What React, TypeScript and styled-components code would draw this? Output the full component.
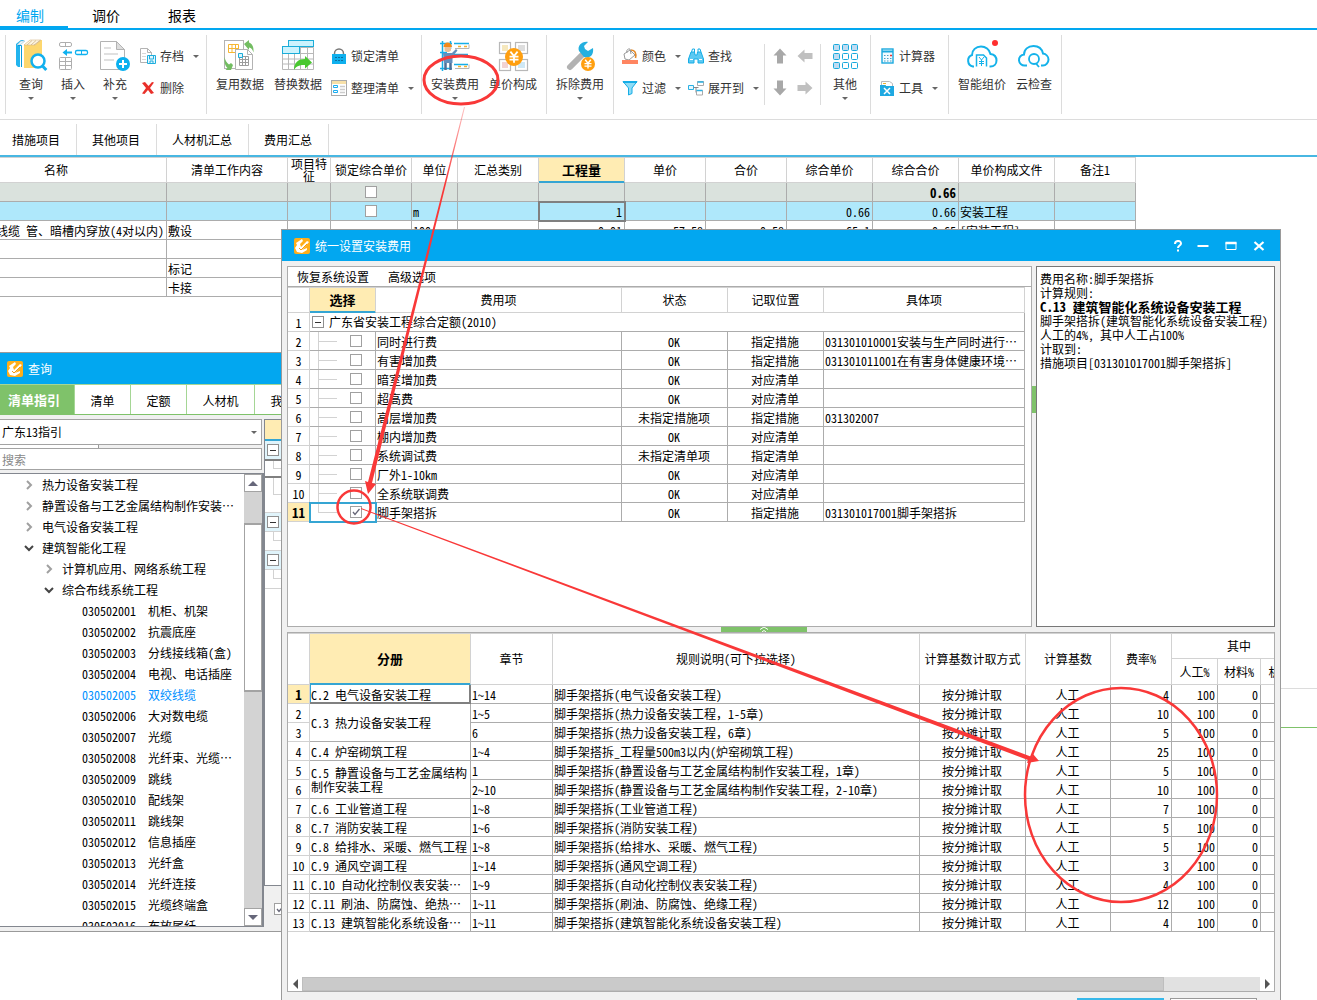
import React from "react";
import styled, { createGlobalStyle, css } from "styled-components";

const ui = `"Noto Sans CJK SC", sans-serif`;
const grid = `"Noto Sans Mono CJK SC", "Noto Sans CJK SC", sans-serif`;
const brand = "#02a7f0";
const green = "#7fc26a";
const line = "#acacac";
const softLine = "#d2d2d2";
const yellow = "#ffecb3";
const focusBlue = "#35a5d3";

const Global = createGlobalStyle`
  *, *::before, *::after { box-sizing: border-box; }
  body { margin: 0; background: #fff; }
  button, input, select { font: inherit; color: inherit; margin: 0; padding: 0; border: 0; background: none; }
  ul { list-style: none; margin: 0; padding: 0; }
`;

const Desktop = styled.div`
  position: relative;
  display: flex;
  flex-direction: column;
  height: 100vh;
  overflow: hidden;
  background: #fff;
  color: #000;
  font: 12px/18px ${grid};
`;

/* ---------- menu and ribbon ---------- */

const MenuBar = styled.nav`
  flex: none;
  display: flex;
  height: 30px;
  border-bottom: 2px solid ${brand};
  font: 14px/32px ${ui};
`;

const MenuTab = styled.button<{ $active?: boolean }>`
  height: 28px;
  padding: 0 24px;
  line-height: 30px;
  white-space: nowrap;
  &:first-child { padding-left: 16px; }
  ${p => p.$active && css`color: ${brand}; border-bottom: 2px solid ${brand};`}
`;

const Ribbon = styled.div`
  flex: none;
  display: flex;
  height: 90px;
  padding: 5px 0 0 5px;
  border-bottom: 1px solid #dcdcdc;
  color: #333;
  font: 12px/16px ${ui};
`;

const Group = styled.div<{ $w: number; $last?: boolean }>`
  flex: none;
  display: flex;
  align-items: flex-start;
  width: ${p => p.$w}px;
  height: 79px;
  padding-left: 4px;
  border-left: 1px solid #dcdcdc;
  ${p => p.$last && css`border-right: 1px solid #dcdcdc;`}
`;

const SubGroup = styled.div`
  display: flex;
  height: 61px;
  margin-top: 9px;
  padding: 0 3px 0 2px;
  border: solid #dcdcdc;
  border-width: 0 1px;
`;

const Big = styled.button<{ $w: number }>`
  display: flex;
  flex-direction: column;
  align-items: center;
  width: ${p => p.$w}px;
  padding-top: 4px;
  white-space: nowrap;
  cursor: pointer;
  svg { display: block; overflow: visible; }
  span { margin: 5px 0; }
`;

const SmallColumn = styled.div<{ $w: number }>`
  width: ${p => p.$w}px;
  padding: 5px 0 0 4px;
`;

const Small = styled.button`
  display: flex;
  align-items: center;
  height: 32px;
  white-space: nowrap;
  cursor: pointer;
  svg { display: block; margin-right: 4px; }
`;

const Caret = styled.i<{ $gap?: number }>`
  width: 0;
  height: 0;
  margin-left: ${p => p.$gap || 0}px;
  border: solid transparent;
  border-width: 3px 3px 0;
  border-top-color: #666;
`;

const Nudge = styled.div`
  display: grid;
  grid-template: 32px 32px / 25px 25px;
  margin-top: -4px;
  button { display: grid; place-items: center; }
`;

const Svg = ({ s = 32, children }: { s?: number; children: React.ReactNode }) => (
  <svg width={s} height={s} viewBox={`0 0 ${s} ${s}`} fill="none" aria-hidden="true">{children}</svg>
);

const Coin = ({ x, y, r }: { x: number; y: number; r: number }) => (
  <g>
    <circle cx={x} cy={y} r={r} fill="#ff9f0f" />
    <g stroke="#fff" strokeWidth={r / 5}>
      <path d={`M${x - r * 0.4} ${y - r * 0.6}L${x} ${y - r * 0.1}L${x + r * 0.4} ${y - r * 0.6}M${x} ${y - r * 0.1}V${y + r * 0.65}`} />
      <path d={`M${x - r * 0.5} ${y - r * 0.05}H${x + r * 0.5}M${x - r * 0.5} ${y + r * 0.3}H${x + r * 0.5}`} />
    </g>
  </g>
);

const icons = {
  books: (
    <Svg>
      <path d="M1 5l5-4h3L5 6v22H3l-2-2z" fill="#22b4ee" />
      <path d="M6 2h4L5 6H2z" fill="#e8f6fc" stroke="#a9c6d2" strokeWidth=".6" />
      <path d="M3 6.500h3.500V28" stroke="#0a9bd8" />
      <path d="M9 6l6-5h12v22l-5 6H9z" fill="#fdd76e" />
      <path d="M15 1h11l-6 5H9z" fill="#fdf5e0" stroke="#d6b98a" strokeWidth=".6" />
      <path d="M17 1.500l-5 4.500m9-4.500l-5 4.500m9-4.500l-6 4.500" stroke="#cdb187" strokeWidth=".8" />
      <circle cx="23" cy="22" r="6.500" fill="#fff" stroke="#12b0ee" strokeWidth="2.500" />
      <path d="M27.500 27l3.800 4" stroke="#12b0ee" strokeWidth="3" />
    </Svg>
  ),
  insert: (
    <Svg>
      <g stroke="#aeaeae">
        <rect x="2.500" y="3.500" width="12" height="4" rx="1.500" /><path d="M8.500 3.500v4" />
        <rect x="2.500" y="18.500" width="12" height="12" rx="1" /><path d="M8.500 18.500v12m-6-8h12m-12 4h12" />
      </g>
      <path d="M5.500 13.500l4.500-3.500v2.500h5v2h-5V17z" fill="#0db1f0" />
      <rect x="18.500" y="11.500" width="12" height="4" rx="1.500" stroke="#0db1f0" strokeWidth="1.300" /><path d="M24.500 11.500v4" stroke="#0db1f0" />
    </Svg>
  ),
  supplement: (
    <Svg>
      <path d="M1.500 2.500h16l8 8v20h-24z" fill="#fff" stroke="#b3b3b3" />
      <path d="M17.500 2.500v8h8z" fill="#ddd" stroke="#b3b3b3" />
      <path d="M5 9h7M5 15h14M5 21h10" stroke="#e0e0e0" strokeWidth="2" />
      <circle cx="24" cy="25" r="7" fill="#0bb0ef" />
      <path d="M24 21v8m-4-4h8" stroke="#fff" strokeWidth="2" />
    </Svg>
  ),
  archive: (
    <Svg s={16}>
      <path d="M.5.500h7l4 4v10H.5z" fill="#fff" stroke="#b3b3b3" /><path d="M7.500.500v4h4" stroke="#b3b3b3" />
      <path d="M2 5.500h4m-4 3h4m-4 3h4" stroke="#d8d8d8" />
      <path d="M7.500 7.500h8v8h-8z" fill="#e3f6fd" stroke="#1eaede" /><path d="M9.500 8v3h4V8m-3.500 7.500v-2.500h3v2.500" stroke="#1eaede" />
    </Svg>
  ),
  remove: (
    <Svg s={16}>
      <path d="M2 3l3-1 3.500 4L12 2l2 .5-4 5.500 4 5-3 1-3-4-3.500 4L2 13.500 6 8z" fill="#e9302a" />
    </Svg>
  ),
  reuse: (
    <Svg>
      <rect x=".5" y="1.500" width="19" height="28" fill="#fff" stroke="#b3b3b3" />
      <path d="M4.500 5.500h10v8h-10zm0 4h10m-6.500-4v8m3.500-8v8" stroke="#f7b731" />
      <path d="M11.500 10.500h12l5 5v15h-17z" fill="#fff" stroke="#b3b3b3" /><path d="M23.500 10.500v5h5" stroke="#b3b3b3" />
      <path d="M15.500 17.500h9v9h-9zm0 3h9m-9 3h9m-6-6v9m3-9v9" stroke="#9c9c9c" />
      <path d="M14.500 14.500h4v4h-4z" fill="#d9f3fc" stroke="#1badd9" />
      <path d="M20 5l5-4v2.500c3 1 5 4 4.500 10-1-3-2-4.500-4.500-5V11z" fill="#73bd62" />
      <path d="M9 26l-2 5H1.500l2-2C1 27 0 23 .5 18c1 4 2.500 6 4.500 7.500L7 24z" fill="#73bd62" />
    </Svg>
  ),
  replace: (
    <Svg>
      <path d="M.5 8.500h31v22H.5zm0 6h31m-31 5.500h31m-31 5h31M6.500 8.500v22m6-22v22m6-22v22m7-22v22" stroke="#b8b8b8" />
      <rect x="6.500" y="1.500" width="25" height="6" fill="#cdf3fd" stroke="#1badd9" />
      <rect x=".5" y="7.500" width="17" height="7" fill="#cdf3fd" stroke="#1badd9" />
      <path d="M12 31c0-8 5-11 11-11v-3l7 6.500-7 6V26c-4 0-8 0-11 5z" fill="#49c830" />
    </Svg>
  ),
  lock: (
    <Svg s={16}>
      <path d="M3.500 7V5.500a4.500 4.500 0 019 0V7" stroke="#777" strokeWidth="1.500" />
      <rect x="1" y="6" width="14" height="10" fill="#0fb0ee" />
      <path d="M4 9.500h2m1 0h2m1 0h2M4 12.500h2m1 0h2m1 0h2" stroke="#0b6ea0" />
    </Svg>
  ),
  tidy: (
    <Svg s={16}>
      <rect x=".5" y=".5" width="15" height="15" fill="#fff" stroke="#aaa" />
      <path d="M1 2.500h14" stroke="#f7e0a8" strokeWidth="3" />
      <path d="M2.500 5.500h4v2h-4zm0 5h4v2h-4z" stroke="#1badf0" />
      <path d="M9 6.500h5M9 9.500h5M9 12.500h5" stroke="#ccc" strokeWidth="1.500" />
    </Svg>
  ),
  install: (
    <Svg>
      <path d="M3.500 2v30m8-30v8M1 4.500h12M1 13.500h7M1 29.500h12" stroke="#16aee8" strokeWidth="1.500" />
      <path d="M15 4.500h15m-15 11h14m-14 10h14" stroke="#16aee8" strokeWidth="1.300" />
      <path d="M16 9.500h14v-4m-14 24h14v-4" stroke="#b5b5b5" />
      <path d="M19 7.500h3m3 0h3M19 27.500h3m3 0h3" stroke="#f5b431" strokeWidth="1.500" />
      <path d="M4.500 8c0-6 8-6 8.500 0z" fill="#f28a1c" /><path d="M5.500 8h6.500v3.500l-2 1.500H7l-1.500-1.500z" fill="#eabf97" />
      <path d="M4 14h9l4-4 1.500 1.500-5 6V24H5z" fill="#638fbd" /><path d="M6.500 24v7m5-7v7" stroke="#4f6f96" strokeWidth="2.500" />
    </Svg>
  ),
  compose: (
    <Svg>
      <g strokeWidth="1.200" stroke="#b8b8b8" fill="#fff">
        <rect x="2.500" y="3.500" width="11" height="11" /><rect x="18.500" y="3.500" width="12" height="11" />
        <rect x="2.500" y="20.500" width="11" height="11" /><rect x="18.500" y="20.500" width="12" height="11" />
      </g>
      <path d="M5 6h6v6H5z" fill="#f6e8bd" /><path d="M21 6h7v6h-7z" fill="#ddd" />
      <path d="M5 23h6v6H5z" fill="#f2d3d3" /><path d="M21 23h7v6h-7z" fill="#cfe8f5" />
      <Coin x={17} y={18} r={9} />
    </Svg>
  ),
  wrench: (
    <Svg>
      <path d="M6 28L19 15" stroke="#b2b2b2" strokeWidth="6" strokeLinecap="round" />
      <path d="M24 3c-6-1-11 4-9 9l5 6c6 2 10-2 9-9l-5 3-3-2-1-3z" fill="#25b0df" />
      <Coin x={24} y={25} r={7} />
    </Svg>
  ),
  color: (
    <Svg s={16}>
      <path d="M2 6l6-4 5 5-6 5-4-1z" fill="#fff" stroke="#999" /><path d="M5 5c-1-3 1-4.500 3-4l1 5" stroke="#999" />
      <path d="M9 2c4 0 5.500 3 4.500 8" stroke="#e48a2a" strokeWidth="1.600" />
      <path d="M0 12h16v4H0z" fill="#ff8561" />
    </Svg>
  ),
  filter: (
    <Svg s={16}>
      <path d="M1 1.500h14L10 8v5.500L6.500 15V8z" fill="#8edcf6" stroke="#16ade6" /><path d="M1 2h14" stroke="#16ade6" strokeWidth="2" />
    </Svg>
  ),
  find: (
    <Svg s={16}>
      <path d="M3.500 4l1-3h2v3m6.500 0l-1-3h-2v3" stroke="#16ade6" />
      <path d="M3 4h3.500l.5 3h2l.5-3H13l2.500 7v4H10v-4H6v4H.5v-4z" fill="#5cc9f2" stroke="#16ade6" />
      <path d="M2 11.500h3m6 0h3" stroke="#fff" />
    </Svg>
  ),
  expand: (
    <Svg s={16}>
      <path d="M.5 5.500h5v4h-5z" stroke="#29b1e4" fill="#e8f7fd" /><path d="M5.500 7.500h5m-2.500 0v5h2" stroke="#888" />
      <path d="M9.500 1.500h6v4h-6zm-1 9h6v4.500h-6z" fill="#fff" stroke="#aaa" /><path d="M9.500 2h6m-7 8.500h6" stroke="#29b1e4" strokeWidth="1.500" />
    </Svg>
  ),
  others: (
    <Svg>
      {[0, 1, 2].map(r => [0, 1, 2].map(c => (
        <rect key={`${r}${c}`} x={4.500 + c * 9} y={5.500 + r * 9} width="6" height="6" rx="1" stroke="#18a9dc"
          fill={r === 0 || c === 0 ? "#bfdcf2" : "#fff"} />
      )))}
    </Svg>
  ),
  calc: (
    <Svg s={16}>
      <rect x="3" y="1" width="11" height="14" stroke="#1ba9de" strokeWidth="1.400" fill="#f2fbff" /><path d="M3 3.500h11" stroke="#1ba9de" strokeWidth="2" />
      <path d="M5 7.500h1.500m1.500 0h1.500M5 10.500h1.500m1.500 0h1.500m1.500 0H12.500M5 13h1.500m1.500 0h1.500m1.500 0H12.500" stroke="#4d9fc4" />
      <path d="M11 7.500h2" stroke="#e33" strokeWidth="1.500" />
    </Svg>
  ),
  tools: (
    <Svg s={16}>
      <path d="M2.500 6V1.500h8l3 2V6" fill="#fff" stroke="#bbb" /><path d="M4 3.500h3m-3 2h3" stroke="#f2b432" />
      <path d="M1 5h5l1 1h8v10H1z" fill="#1fa9e2" />
      <path d="M5 8l6 6m0-6l-6 6" stroke="#fff" strokeWidth="1.500" />
    </Svg>
  ),
  cloudPrice: (
    <Svg>
      <path d="M8 27.500H7a6 6 0 01-1-11.500c0-5 4-8.500 9-8.500 4.500 0 8.500 3 9.500 7.500 3.500.5 6 3 6 6.500s-2.500 6-6 6h-1" stroke="#14b2ea" strokeWidth="2" />
      <path d="M10.500 27.500V16h7l3 3v8.500" stroke="#14b2ea" strokeWidth="1.500" />
      <path d="M13 18l2.500 3 2.500-3m-2.500 3v6m-2.500-4.500h5m-5 2h5" stroke="#14b2ea" />
      <circle cx="29" cy="4" r="3" fill="#ff2e2e" />
    </Svg>
  ),
  cloudCheck: (
    <Svg>
      <path d="M9 26.500H7a5.500 5.500 0 01-1-11c0-5 4-8.500 9.500-8.500s8.500 3 9.500 7.500c3 .5 5.500 3 5.500 6s-2.500 6-5.500 6h-2" stroke="#14b2ea" strokeWidth="2" />
      <circle cx="16" cy="20" r="5" stroke="#14b2ea" strokeWidth="1.800" /><path d="M18 24.500l3 3.500" stroke="#14b2ea" strokeWidth="1.800" />
    </Svg>
  ),
};

const ArrowIcon = ({ turn, fill }: { turn: number; fill: string }) => (
  <svg width="16" height="16" viewBox="0 0 16 16" aria-hidden="true">
    <path d="M8 .5l6.500 7H11v8H5v-8H1.500z" fill={fill} transform={`rotate(${turn} 8 8)`} />
  </svg>
);

const AppMark = () => (
  <svg width="16" height="16" viewBox="0 0 16 16" aria-hidden="true">
    <rect width="16" height="16" rx="2" fill="#ffae1a" />
    <path d="M2 5l6-4 1 2-3 3 1 3 6-6 2 1-7 8 5-2 0 2-5 3-5-1-2-4 2-3z" fill="#fff" />
    <path d="M5 10l2 2 6-6" stroke="#f19a18" strokeWidth="1" fill="none" />
  </svg>
);

const BigButton = ({ icon, label, w = 58, menu }: { icon: keyof typeof icons; label: string; w?: number; menu?: boolean }) => (
  <Big $w={w}>{icons[icon]}<span>{label}</span>{menu && <Caret />}</Big>
);

const SmallButton = ({ icon, label, menu }: { icon: keyof typeof icons; label: string; menu?: boolean }) => (
  <Small>{icons[icon]}{label}{menu && <Caret $gap={9} />}</Small>
);

/* ---------- main sheet ---------- */

const SheetTabs = styled.nav`
  flex: none;
  display: flex;
  align-items: flex-end;
  height: 37px;
  border-bottom: 2px solid #48b7e2;
`;

const SheetTab = styled.button`
  height: 31px;
  padding: 0 16px 0 15px;
  border-right: 1px solid #dcdcdc;
  white-space: nowrap;
  &:first-child { padding-left: 12px; }
`;

const SheetArea = styled.div`
  flex: 1;
  min-height: 0;
  overflow: hidden;
`;

const Dock = styled.div`
  flex: 0 0 312px;
  border-top: 1px solid #dcdcdc;
  &::before {
    content: "";
    display: block;
    height: 39px;
    border-bottom: 1px solid ${green};
  }
`;

const Table = styled.table<{ $shift?: number }>`
  table-layout: fixed;
  width: 0;
  margin-left: ${p => -(p.$shift || 0)}px;
  border-collapse: separate;
  border-spacing: 0;
`;

const Th = styled.th<{ $h?: number; $current?: boolean; $top?: boolean }>`
  height: ${p => p.$h || 25}px;
  padding: 0;
  border: solid ${softLine};
  border-width: ${p => (p.$top ? 1 : 0)}px 1px 1px 0;
  font-weight: normal;
  line-height: 14px;
  white-space: nowrap;
  overflow: hidden;
  ${p => p.$current && css`background: ${yellow}; font-weight: bold; font-size: 13px; box-shadow: inset 0 -1px ${focusBlue}; border-bottom-color: ${focusBlue};`}
`;

const WrapTh = styled(Th)`
  white-space: normal;
  overflow: visible;
  line-height: 12px;
`;

const Td = styled.td<{ $align?: string; $bg?: string; $bold?: boolean; $ring?: string }>`
  height: 19px;
  padding: 2px 2px 0 1px;
  border: solid ${line};
  border-width: 0 1px 1px 0;
  line-height: 16px;
  text-align: ${p => p.$align || "left"};
  background: ${p => p.$bg || "transparent"};
  ${p => p.$bold && css`font-weight: bold; font-size: 13px;`}
  white-space: nowrap;
  overflow: hidden;
  ${p => p.$ring && css`outline: 2px solid ${p.$ring}; outline-offset: -1px;`}
`;

const MergedTd = styled(Td)<{ $picked?: boolean; $double?: boolean }>`
  padding-top: ${p => (p.$double ? 0 : 2)}px;
  line-height: 14px;
  white-space: normal;
  ${p => p.$picked && css`
    border-color: #808080;
    box-shadow: inset -1px -1px #808080, inset 1px 0 ${focusBlue};
  `}
`;

const RowNo = styled.th<{ $current?: boolean }>`
  height: 19px;
  padding: 2px 0 0;
  border: solid ${softLine};
  border-width: 0 1px 1px 0;
  font-weight: ${p => (p.$current ? "bold" : "normal")};
  font-size: ${p => (p.$current ? 13 : 12)}px;
  background: ${p => (p.$current ? yellow : "#fff")};
  line-height: 16px;
`;

const Check = styled.input.attrs({ type: "checkbox" })`
  appearance: none;
  display: block;
  flex: none;
  width: 12px;
  height: 12px;
  margin: 0 auto;
  border: 1px solid #a0a0a0;
  background: #fff;
  &:checked {
    background: #fff url("data:image/svg+xml,%3Csvg xmlns='http://www.w3.org/2000/svg' viewBox='0 0 10 10'%3E%3Cpath d='M2 5l2 2.500L8.500 2' fill='none' stroke='%23667' stroke-width='1.300'/%3E%3C/svg%3E");
  }
`;

const Cols = ({ w }: { w: number[] }) => <colgroup>{w.map((x, i) => <col key={i} style={{ width: x }} />)}</colgroup>;

const mainHeads = ["名称", "清单工作内容", "项目特征", "锁定综合单价", "单位", "汇总类别", "工程量", "单价", "合价", "综合单价", "综合合价", "单价构成文件", "备注1"];
const mainWidths = [221, 121, 43, 81, 46, 81, 86, 81, 81, 86, 86, 96, 81];
const mainRows: { bg?: string; bold?: boolean; check?: boolean; cells: Record<number, string> }[] = [
  { bg: "#dae2dd", bold: true, check: true, cells: { 10: "0.66" } },
  { bg: "#afe8fb", check: true, cells: { 4: "m", 6: "1", 9: "0.66", 10: "0.66", 11: "安装工程" } },
  { cells: { 0: "线缆 管、暗槽内穿放(4对以内)", 1: "敷设", 4: "100", 6: "0.01", 7: "57.58", 8: "0.58", 9: "65.1", 10: "0.65", 11: "[安装工程]" } },
  { cells: {} },
  { cells: { 1: "标记" } },
  { cells: { 1: "卡接" } },
];

const CheckTd = styled(Td)`
  padding-top: 0;
`;

const MainSheet = () => (
  <Table $shift={54}>
    <Cols w={mainWidths} />
    <thead>
      <tr>{mainHeads.map((h, i) => i === 2
        ? <WrapTh key={h} $h={26} $top>{h}</WrapTh>
        : <Th key={h} $h={26} $top $current={i === 6}>{h}</Th>)}</tr>
    </thead>
    <tbody>
      {mainRows.map((r, n) => (
        <tr key={n}>
          {mainHeads.map((h, i) => i === 3
            ? <CheckTd key={h} $bg={r.bg}>{r.check && <Check aria-label={h} />}</CheckTd>
            : (
              <Td key={h} $bg={r.bg} $bold={r.bold} $align={i === 0 || (i > 5 && i < 11) ? "right" : "left"} $ring={n === 1 && i === 6 ? "#808080" : undefined}>
                {r.cells[i]}
              </Td>
            ))}
        </tr>
      ))}
    </tbody>
  </Table>
);

/* ---------- windows ---------- */

const TitleBar = styled.header<{ $pad: number }>`
  display: flex;
  align-items: center;
  gap: 5px;
  height: 31px;
  padding-left: ${p => p.$pad}px;
  background: ${brand};
  color: #fff;
  font: 12px/31px ${ui};
`;

const QueryWindow = styled.section`
  position: absolute;
  left: 0;
  top: 352px;
  width: 420px;
  border: solid #9a9a9a;
  border-width: 1px 0;
  background: #f0f0f0;
`;

const QueryTabs = styled.nav`
  display: flex;
  height: 31px;
  background: #fff;
  border-bottom: 1px solid ${green};
`;

const QueryTab = styled.button<{ $w: number; $active?: boolean }>`
  flex: none;
  width: ${p => p.$w}px;
  padding-top: 2px;
  border: solid #a5d695;
  border-width: 1px 1px 0 0;
  ${p => p.$active && css`background: ${green}; color: #fff; font-weight: bold; font-size: 13px; padding: 0 6px 0 0;`}
`;

const QueryBody = styled.div`
  display: flex;
  align-items: flex-start;
  padding: 4px 0;
`;

const QuerySide = styled.div`
  width: 264px;
  flex: none;
`;

const Combo = styled.div`
  position: relative;
  width: 262px;
  select {
    appearance: none;
    display: block;
    width: 100%;
    height: 26px;
    padding-left: 2px;
    border: 1px solid #a3a3a3;
    border-left: 0;
    background: #fff;
  }
  i { position: absolute; right: 5px; top: 12px; pointer-events: none; }
`;

const Grip = styled.div`
  width: 99px;
  height: 3px;
  border-right: 1px solid #999;
  background: #fff;
`;

const Search = styled.input`
  display: block;
  width: 262px;
  height: 22px;
  padding-left: 2px;
  border: 1px solid #a3a3a3;
  border-left: 0;
  background: #fff;
  &::placeholder { color: #888; opacity: 1; }
`;

const TreeBox = styled.div`
  display: flex;
  height: 454px;
  margin-top: 3px;
  border: solid #83878f;
  border-width: 1px 2px 1px 0;
  background: #fff;
`;

const Tree = styled.ul`
  flex: 1;
  min-width: 0;
  overflow: hidden;
`;

const TreeRow = styled.li<{ $indent: number; $active?: boolean }>`
  height: 21px;
  padding-left: ${p => p.$indent}px;
  color: ${p => (p.$active ? "#0090ff" : "#000")};
  button { display: flex; align-items: center; height: 21px; white-space: nowrap; }
  svg { margin-right: 8px; }
  span { width: 66px; text-align: left; }
`;

const VScroll = styled.div`
  width: 18px;
  display: flex;
  flex-direction: column;
  background: #d3d3d3;
  button { flex: none; height: 18px; border: 1px solid #a3a3a3; background: #fff; display: grid; place-items: center; }
`;

const VThumb = styled.div`
  height: 169px;
  margin-top: 31px;
  margin-bottom: auto;
  border: 1px solid #a3a3a3;
  border-width: 2px 1px;
  background: #fff;
`;

const Triangle = styled.i<{ $dir: "up" | "down" | "left" | "right" }>`
  width: 0;
  height: 0;
  border: 5px solid transparent;
  ${p => p.$dir === "up" && css`border-top: 0; border-bottom-color: #66677a;`}
  ${p => p.$dir === "down" && css`border-bottom: 0; border-top-color: #66677a;`}
  ${p => p.$dir === "left" && css`border-left: 0; border-right-color: #555;`}
  ${p => p.$dir === "right" && css`border-right: 0; border-left-color: #555;`}
`;

const ResultSide = styled.div`
  flex: 1;
`;

const ResultPane = styled.div`
  height: 467px;
  border: 1px solid #83878f;
  background: #fff;
`;

const Band = styled.div<{ $h: number; $bg?: string; $edge?: string; $thick?: number }>`
  height: ${p => p.$h}px;
  padding: 3px 2px 0;
  background: ${p => p.$bg || "#fff"};
  border-bottom: ${p => p.$thick || 1}px solid ${p => p.$edge || softLine};
`;

const Elbow = styled.div<{ $h: number }>`
  width: 14px;
  height: ${p => p.$h}px;
  margin: -3px 0 0 6px;
  border: solid ${softLine};
  border-width: 0 0 1px 1px;
`;

const Fold = styled.button`
  display: grid;
  place-items: center;
  flex: none;
  width: 12px;
  height: 12px;
  border: 1px solid #8f8f8f;
  background: #fff;
  &::before { content: ""; width: 6px; height: 1px; background: #333; }
`;

const ResultFoot = styled.div`
  padding: 17px 0 0 10px;
  input { margin: 0; }
`;

const treeNodes: [number, boolean, string][] = [
  [0, false, "热力设备安装工程"],
  [0, false, "静置设备与工艺金属结构制作安装…"],
  [0, false, "电气设备安装工程"],
  [0, true, "建筑智能化工程"],
  [1, false, "计算机应用、网络系统工程"],
  [1, true, "综合布线系统工程"],
];
const leaves = ["机柜、机架", "抗震底座", "分线接线箱(盒)", "电视、电话插座", "双绞线缆", "大对数电缆", "光缆", "光纤束、光缆…", "跳线", "配线架", "跳线架", "信息插座", "光纤盒", "光纤连接", "光缆终端盒", "布放尾纤"];

const Query = () => (
  <QueryWindow aria-label="查询">
    <TitleBar $pad={7}><AppMark />查询</TitleBar>
    <QueryTabs>
      <QueryTab $w={75} $active>清单指引</QueryTab>
      <QueryTab $w={56}>清单</QueryTab>
      <QueryTab $w={56}>定额</QueryTab>
      <QueryTab $w={68}>人材机</QueryTab>
      <QueryTab $w={44}>我</QueryTab>
    </QueryTabs>
    <QueryBody>
      <QuerySide>
        <Combo>
          <select aria-label="指引"><option>广东13指引</option></select>
          <Caret />
        </Combo>
        <Grip />
        <Search placeholder="搜索" aria-label="搜索" />
        <TreeBox>
          <Tree>
            {treeNodes.map(([level, open, name]) => (
              <TreeRow key={name} $indent={24 + level * 20}>
                <button>
                  <svg width="10" height="10" viewBox="0 0 10 10" fill="none" strokeWidth="2" aria-hidden="true">
                    {open ? <path d="M1 3l4 4 4-4" stroke="#444" /> : <path d="M3 1l4 4-4 4" stroke="#a0a0a0" />}
                  </svg>
                  {name}
                </button>
              </TreeRow>
            ))}
            {leaves.map((name, i) => (
              <TreeRow key={i} $indent={82} $active={i === 4}>
                <button><span>{`0305020${String(i + 1).padStart(2, "0")}`}</span>{name}</button>
              </TreeRow>
            ))}
          </Tree>
          <VScroll>
            <button aria-label="向上"><Triangle $dir="up" /></button>
            <VThumb />
            <button aria-label="向下"><Triangle $dir="down" /></button>
          </VScroll>
        </TreeBox>
      </QuerySide>
      <ResultSide>
        <ResultPane>
          <Band $h={21} $bg={yellow} $edge={focusBlue} $thick={2} />
          <Band $h={20} $bg="#e0f4fb" $edge="#808080" $thick={2}><Fold aria-label="折叠" /></Band>
          <Band $h={17} $edge="#808080" $thick={2}><Elbow $h={8} /></Band>
          <Band $h={35}><Elbow $h={17} /></Band>
          <Band $h={19} $bg="#e0f4fb"><Fold aria-label="折叠" /></Band>
          <Band $h={19}><Elbow $h={9} /></Band>
          <Band $h={19} $bg="#e0f4fb"><Fold aria-label="折叠" /></Band>
          <Band $h={19}><Elbow $h={9} /></Band>
        </ResultPane>
        <ResultFoot><Check defaultChecked aria-label="选中" /></ResultFoot>
      </ResultSide>
    </QueryBody>
  </QueryWindow>
);

/* ---------- fee dialog ---------- */

const FeeDialog = styled.section`
  position: absolute;
  left: 281px;
  right: 36px;
  top: 229px;
  border: 1px solid #9a9a9a;
  background: #f0f0f0;
`;

const Caption = styled.div`
  display: flex;
  margin-left: auto;
  padding-right: 7px;
  button { display: grid; place-items: center; width: 28px; height: 31px; }
  button:first-child { width: 22px; }
`;

const Upper = styled.div`
  display: flex;
  height: 366px;
  padding: 5px 5px 0;
`;

const FeePane = styled.div`
  flex: 1;
  min-width: 0;
  border: 1px solid ${line};
  background: #fff;
  overflow: hidden;
`;

const FeeMenu = styled.div`
  display: flex;
  gap: 19px;
  height: 20px;
  padding-left: 9px;
  border-bottom: 1px solid ${line};
`;

const SideHandle = styled.div`
  flex: none;
  width: 4px;
  height: 27px;
  margin-top: 120px;
  background: ${green};
`;

const RulePane = styled.div`
  flex: none;
  width: 239px;
  padding: 5px 3px;
  border: 1px solid #777;
  background: #fff;
  line-height: 14px;
  white-space: nowrap;
  overflow: hidden;
  p { margin: 0; }
  b { display: block; font-size: 13px; }
`;

const MidHandle = styled.div`
  display: grid;
  place-items: center;
  width: 86px;
  height: 5px;
  margin-left: 439px;
  background: ${green};
`;

const DetailPane = styled.div`
  display: flex;
  flex-direction: column;
  height: 360px;
  margin: 0 5px;
  border: 1px solid ${line};
  background: #fff;
  overflow: hidden;
`;

const HScroll = styled.div`
  display: flex;
  flex: none;
  height: 14px;
  margin-top: auto;
  background: #e1e1e1;
  button { flex: none; width: 14px; background: #fff; display: grid; place-items: center; }
`;

const HThumb = styled.div`
  width: 862px;
  margin-right: auto;
  border: 1px solid #bebebe;
  background: #cacaca;
`;

const Footer = styled.footer`
  display: flex;
  justify-content: flex-end;
  gap: 6px;
  height: 40px;
  padding: 6px 23px 0 0;
`;

const FootButton = styled.button<{ $primary?: boolean }>`
  width: 87px;
  height: 26px;
  border: 1px solid #999;
  background: #fff;
  ${p => p.$primary && css`border-color: #37b8ea; border-top-width: 2px; background: ${brand}; color: #fff;`}
`;

const TreeCell = styled.div`
  display: flex;
  align-items: center;
  height: 18px;
`;

const Branch = styled.i<{ $last?: boolean }>`
  flex: none;
  width: 19px;
  height: 18px;
  margin: 0 13px 0 8px;
  background:
    linear-gradient(${softLine}, ${softLine}) 0 0 / 1px ${p => (p.$last ? "9px" : "100%")} no-repeat,
    linear-gradient(${softLine}, ${softLine}) 0 9px / 100% 1px no-repeat;
`;

const SelectTd = styled(Td)`
  padding: 0;
  input { margin: 0; }
`;

const RootTd = styled(Td)`
  padding: 0 2px;
  button { margin-right: 5px; }
`;

const fees = [
  ["同时进行费", "OK", "指定措施", "031301010001安装与生产同时进行…"],
  ["有害增加费", "OK", "指定措施", "031301011001在有害身体健康环境…"],
  ["暗室增加费", "OK", "对应清单", ""],
  ["超高费", "OK", "对应清单", ""],
  ["高层增加费", "未指定措施项", "指定措施", "031302007"],
  ["棚内增加费", "OK", "对应清单", ""],
  ["系统调试费", "未指定清单项", "指定清单", ""],
  ["厂外1-10km", "OK", "对应清单", ""],
  ["全系统联调费", "OK", "对应清单", ""],
  ["脚手架搭拆", "OK", "指定措施", "031301017001脚手架搭拆"],
];

const details: { book?: string; span?: number; ch: string; rule: string; rate: number }[] = [
  { book: "C.2 电气设备安装工程", ch: "1~14", rule: "脚手架搭拆(电气设备安装工程)", rate: 4 },
  { book: "C.3 热力设备安装工程", span: 2, ch: "1~5", rule: "脚手架搭拆(热力设备安装工程，1-5章)", rate: 10 },
  { ch: "6", rule: "脚手架搭拆(热力设备安装工程，6章)", rate: 5 },
  { book: "C.4 炉窑砌筑工程", ch: "1~4", rule: "脚手架搭拆_工程量500m3以内(炉窑砌筑工程)", rate: 25 },
  { book: "C.5 静置设备与工艺金属结构制作安装工程", span: 2, ch: "1", rule: "脚手架搭拆(静置设备与工艺金属结构制作安装工程，1章)", rate: 5 },
  { ch: "2~10", rule: "脚手架搭拆(静置设备与工艺金属结构制作安装工程，2-10章)", rate: 10 },
  { book: "C.6 工业管道工程", ch: "1~8", rule: "脚手架搭拆(工业管道工程)", rate: 7 },
  { book: "C.7 消防安装工程", ch: "1~6", rule: "脚手架搭拆(消防安装工程)", rate: 5 },
  { book: "C.8 给排水、采暖、燃气工程", ch: "1~8", rule: "脚手架搭拆(给排水、采暖、燃气工程)", rate: 5 },
  { book: "C.9 通风空调工程", ch: "1~14", rule: "脚手架搭拆(通风空调工程)", rate: 3 },
  { book: "C.10 自动化控制仪表安装…", ch: "1~9", rule: "脚手架搭拆(自动化控制仪表安装工程)", rate: 4 },
  { book: "C.11 刷油、防腐蚀、绝热…", ch: "1~11", rule: "脚手架搭拆(刷油、防腐蚀、绝缘工程)", rate: 12 },
  { book: "C.13 建筑智能化系统设备…", ch: "1~11", rule: "脚手架搭拆(建筑智能化系统设备安装工程)", rate: 4 },
];

const FeeTable = () => (
  <Table>
    <Cols w={[22, 66, 246, 106, 96, 201]} />
    <thead>
      <tr>
        <Th $h={26} $top />
        <Th $h={26} $top $current>选择</Th>
        {["费用项", "状态", "记取位置", "具体项"].map(h => <Th key={h} $h={26} $top>{h}</Th>)}
      </tr>
    </thead>
    <tbody>
      <tr>
        <RowNo>1</RowNo>
        <RootTd colSpan={5}><TreeCell><Fold aria-label="折叠" />广东省安装工程综合定额(2010)</TreeCell></RootTd>
      </tr>
      {fees.map(([name, state, place, item], i) => (
        <tr key={name}>
          <RowNo $current={i === 9}>{i + 2}</RowNo>
          <SelectTd $ring={i === 9 ? focusBlue : undefined}>
            <TreeCell><Branch $last={i === 9} /><Check defaultChecked={i === 9} aria-label={name} /></TreeCell>
          </SelectTd>
          <Td>{name}</Td>
          <Td $align="center">{state}</Td>
          <Td $align="center">{place}</Td>
          <Td>{item}</Td>
        </tr>
      ))}
    </tbody>
  </Table>
);

const DetailTable = () => (
  <Table>
    <Cols w={[22, 161, 82, 367, 106, 85, 61, 46, 43, 46]} />
    <thead>
      <tr>
        <Th rowSpan={2} $top />
        <Th rowSpan={2} $top $current>分册</Th>
        {["章节", "规则说明(可下拉选择)", "计算基数计取方式", "计算基数", "费率%"].map(h => <Th key={h} rowSpan={2} $top>{h}</Th>)}
        <Th colSpan={3} $h={26} $top>其中</Th>
      </tr>
      <tr>{["人工%", "材料%", "机械%"].map(h => <Th key={h} $h={26}>{h}</Th>)}</tr>
    </thead>
    <tbody>
      {details.map((d, i) => (
        <tr key={i}>
          <RowNo $current={i === 0}>{i + 1}</RowNo>
          {d.book && <MergedTd rowSpan={d.span || 1} $double={d.span === 2} $picked={i === 0}>{d.book}</MergedTd>}
          <Td>{d.ch}</Td>
          <Td>{d.rule}</Td>
          <Td $align="center">按分摊计取</Td>
          <Td $align="center">人工</Td>
          <Td $align="right">{d.rate}</Td>
          <Td $align="right">100</Td>
          <Td $align="right">0</Td>
          <Td />
        </tr>
      ))}
    </tbody>
  </Table>
);

const Fee = () => (
  <FeeDialog aria-label="统一设置安装费用">
    <TitleBar $pad={12}>
      <AppMark />统一设置安装费用
      <Caption>
        <button aria-label="帮助"><svg width="10" height="12" viewBox="0 0 10 12" fill="none"><path d="M2 4c0-4 6-4 6-.5C8 5.500 5 5.500 5 8m0 1.500v2" stroke="#fff" strokeWidth="2" /></svg></button>
        <button aria-label="最小化"><svg width="12" height="12" viewBox="0 0 12 12"><path d="M.5 5h11v2H.5z" fill="#fff" /></svg></button>
        <button aria-label="最大化"><svg width="12" height="12" viewBox="0 0 12 12" fill="none"><path d="M1 2.500h10v7H1z" stroke="#fff" /><path d="M.5 3h11" stroke="#fff" strokeWidth="2.500" /></svg></button>
        <button aria-label="关闭"><svg width="12" height="12" viewBox="0 0 12 12"><path d="M1.500 2l9 8m0-8l-9 8" stroke="#fff" strokeWidth="2.200" /></svg></button>
      </Caption>
    </TitleBar>
    <Upper>
      <FeePane>
        <FeeMenu><button>恢复系统设置</button><button>高级选项</button></FeeMenu>
        <FeeTable />
      </FeePane>
      <SideHandle />
      <RulePane>
        <p>费用名称:脚手架搭拆</p>
        <p>计算规则:</p>
        <p><b>C.13 建筑智能化系统设备安装工程</b></p>
        <p>脚手架搭拆(建筑智能化系统设备安装工程)</p>
        <p>人工的4%, 其中人工占100%</p>
        <p>计取到:</p>
        <p>措施项目[031301017001脚手架搭拆]</p>
      </RulePane>
    </Upper>
    <MidHandle><svg width="8" height="5" viewBox="0 0 8 5"><path d="M0 2.500L4 0l4 2.500M2 5l2-1.500L6 5" stroke="#fff" fill="none" /></svg></MidHandle>
    <DetailPane>
      <DetailTable />
      <HScroll>
        <button aria-label="向左"><Triangle $dir="left" /></button>
        <HThumb />
        <button aria-label="向右"><Triangle $dir="right" /></button>
      </HScroll>
    </DetailPane>
    <Footer><FootButton $primary>确定</FootButton><FootButton>取消</FootButton></Footer>
  </FeeDialog>
);

/* ---------- red pen marks over the windows ---------- */

const Marks = styled.svg`
  position: absolute;
  left: 0;
  top: 0;
  pointer-events: none;
`;

const App = () => (
  <Desktop lang="zh-CN">
    <Global />
    <MenuBar>
      <MenuTab $active>编制</MenuTab>
      <MenuTab>调价</MenuTab>
      <MenuTab>报表</MenuTab>
    </MenuBar>
    <Ribbon>
      <Group $w={201}>
        <BigButton icon="books" label="查询" w={42} menu />
        <BigButton icon="insert" label="插入" w={42} menu />
        <BigButton icon="supplement" label="补充" w={42} menu />
        <SmallColumn $w={70}><SmallButton icon="archive" label="存档" menu /><SmallButton icon="remove" label="删除" /></SmallColumn>
      </Group>
      <Group $w={215}>
        <BigButton icon="reuse" label="复用数据" />
        <BigButton icon="replace" label="替换数据" />
        <SmallColumn $w={94}><SmallButton icon="lock" label="锁定清单" /><SmallButton icon="tidy" label="整理清单" menu /></SmallColumn>
      </Group>
      <Group $w={125}>
        <BigButton icon="install" label="安装费用" menu />
        <BigButton icon="compose" label="单价构成" />
      </Group>
      <Group $w={67}>
        <BigButton icon="wrench" label="拆除费用" menu />
      </Group>
      <Group $w={257}>
        <SmallColumn $w={66}><SmallButton icon="color" label="颜色" menu /><SmallButton icon="filter" label="过滤" menu /></SmallColumn>
        <SmallColumn $w={80}><SmallButton icon="find" label="查找" /><SmallButton icon="expand" label="展开到" menu /></SmallColumn>
        <SubGroup>
          <Nudge>
            <button aria-label="上移"><ArrowIcon turn={0} fill="#a8a8a8" /></button>
            <button aria-label="左移"><ArrowIcon turn={-90} fill="#c0c0c0" /></button>
            <button aria-label="下移"><ArrowIcon turn={180} fill="#a8a8a8" /></button>
            <button aria-label="右移"><ArrowIcon turn={90} fill="#c0c0c0" /></button>
          </Nudge>
        </SubGroup>
        <BigButton icon="others" label="其他" w={48} menu />
      </Group>
      <Group $w={78}>
        <SmallColumn $w={70}><SmallButton icon="calc" label="计算器" /><SmallButton icon="tools" label="工具" menu /></SmallColumn>
      </Group>
      <Group $w={114} $last>
        <BigButton icon="cloudPrice" label="智能组价" />
        <BigButton icon="cloudCheck" label="云检查" w={46} />
      </Group>
    </Ribbon>
    <SheetTabs>
      {["措施项目", "其他项目", "人材机汇总", "费用汇总"].map(t => <SheetTab key={t}>{t}</SheetTab>)}
    </SheetTabs>
    <SheetArea><MainSheet /></SheetArea>
    <Dock />
    <Query />
    <Fee />
    <Marks width="1317" height="1000" viewBox="0 0 1317 1000" aria-hidden="true">
      <defs>
        <linearGradient id="fade" x1="0" y1="0" x2="0" y2="1">
          <stop offset="0" stopColor="#f93838" stopOpacity=".3" />
          <stop offset=".2" stopColor="#f93838" />
        </linearGradient>
      </defs>
      <g fill="none" stroke="#f93838">
        <ellipse cx="461" cy="80" rx="37" ry="24" strokeWidth="3" />
        <circle cx="354" cy="507" r="16.500" strokeWidth="2.500" />
        <ellipse cx="1121" cy="795" rx="96" ry="107" strokeWidth="2.500" />
      </g>
      <path d="M464 107l1 0L372 483l4 1L368 494L365 481l3 1z" fill="url(#fade)" />
      <path d="M361 508L1032 757l1-3L1039 761l-12 2 1-3L361 509z" fill="#f93838" />
    </Marks>
  </Desktop>
);

export default App;
